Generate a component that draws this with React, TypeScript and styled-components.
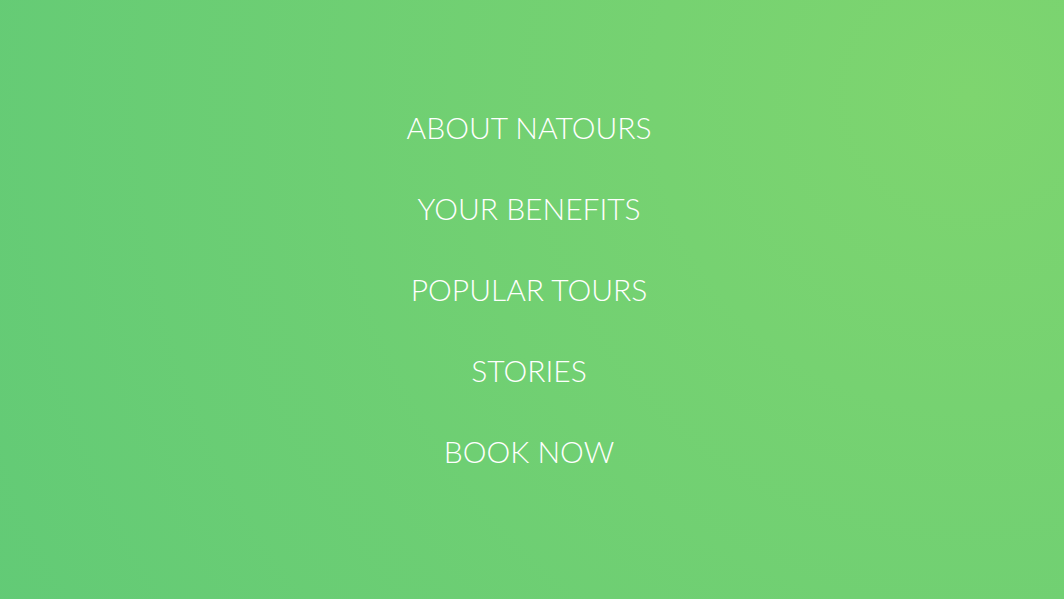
import React from "react";
import styled, { createGlobalStyle } from "styled-components";

const Global = createGlobalStyle`
  html, body { margin: 0; padding: 0; }
  body {
    font-family: Lato, "Open Sans", sans-serif;
    font-weight: 400;
    line-height: 1.7;
    overflow: hidden;
  }
`;

const Background = styled.div`
  width: 100vw;
  height: 100vh;
  display: flex;
  align-items: center;
  justify-content: center;
  background-image: radial-gradient(circle 3394px at 969px 95px, #7ed56f, #28b485);
`;

const Nav = styled.nav`
  padding: 0 6px 20px 0;
`;

const List = styled.ul`
  list-style: none;
  margin: 0;
  padding: 0;
  text-align: center;
`;

const Item = styled.li`
  margin: 10px;
`;

const Link = styled.a`
  display: inline-block;
  padding: 10px 20px;
  font-size: 30px;
  font-weight: 300;
  color: #fff;
  text-decoration: none;
  text-transform: uppercase;
`;

const items = ["About Natours", "Your benefits", "Popular tours", "Stories", "Book now"];

export default function App() {
  return (
    <>
      <Global />
      <Background>
        <Nav>
          <List>
            {items.map((t) => (
              <Item key={t}>
                <Link href="#">{t}</Link>
              </Item>
            ))}
          </List>
        </Nav>
      </Background>
    </>
  );
}
